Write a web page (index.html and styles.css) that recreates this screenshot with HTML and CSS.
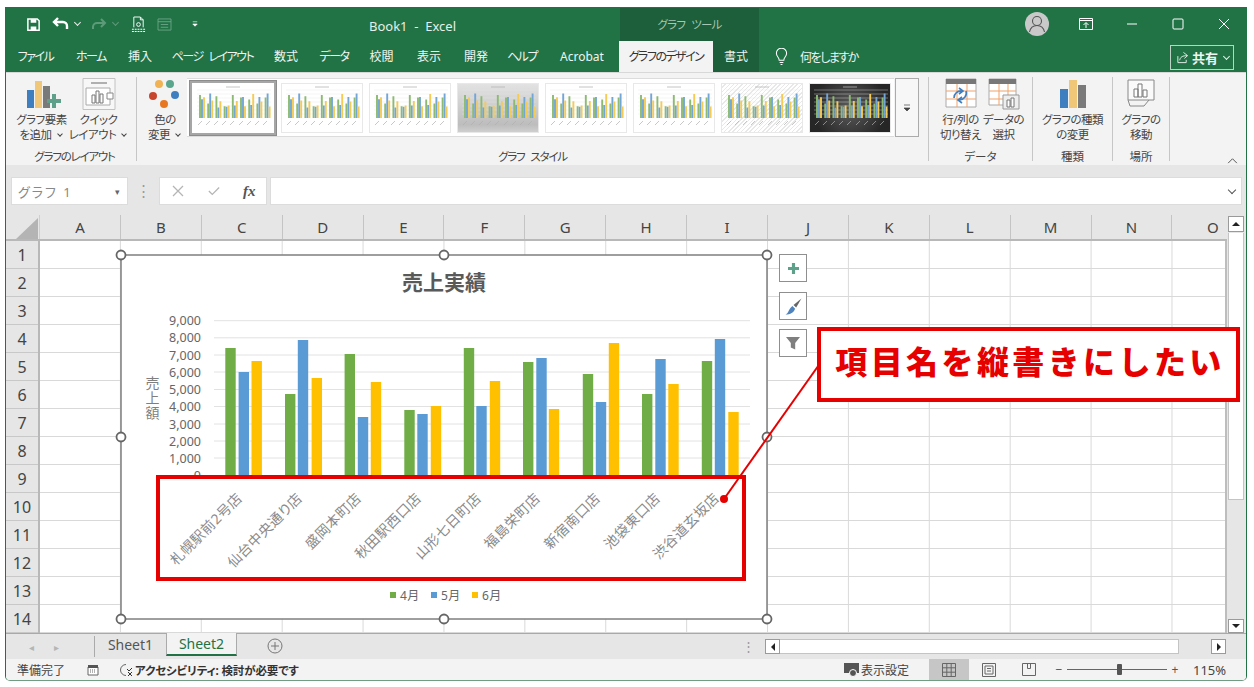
FILE: index.html
```html
<!DOCTYPE html>
<html lang="ja">
<head>
<meta charset="utf-8">
<title>Book1 - Excel</title>
<link rel="stylesheet" href="styles.css">
</head>
<body>
<svg class="defs" width="0" height="0">
  <symbol id="mini" viewBox="0 0 80 48">
    <path class="mg" d="M4 6H78M4 10H78M4 14H78M4 18H78M4 22H78M4 26H78M4 30H78"/>
    <path class="mt" d="M33 3H47"/>
    <path class="mb1" d="M7 34V11M15.2 34V19.4M23.4 34V12.2M31.6 34V22.2M39.8 34V11M48 34V13.5M56.2 34V15.6M64.4 34V19.4M72.6 34V13.5"/>
    <path class="mb2" d="M9 34V15.3M17.2 34V9.4M25.4 34V23.4M33.6 34V22.8M41.8 34V21.6M50 34V12.9M58.2 34V20.9M66.4 34V12.9M74.6 34V9.4"/>
    <path class="mb3" d="M11 34V13.2M19.2 34V16.6M27.4 34V17.2M35.6 34V21.6M43.8 34V16.9M52 34V22.2M60.2 34V10M68.4 34V17.5M76.6 34V22.5"/>
    <path class="ml" d="M5 41l4-4M13 41l4-4M21 41l4-4M29 41l4-4M37 41l4-4M46 41l4-4M54 41l4-4M62 41l4-4M70 41l4-4"/>
  </symbol>
</svg>

<div class="window">
  <header class="titlebar">
    <div class="qat">
      <svg class="q q-save" viewBox="0 0 16 16"><path d="M2 2h10l2 2v10H2z" fill="none" stroke="#fff" stroke-width="1.6"/><path d="M5 2.5h6v3.500H5zM5 10h6v4H5z" fill="#fff"/></svg>
      <svg class="q q-undo" viewBox="0 0 18 16"><path d="M6 2L2 6l4 4M2.500 6H11a4 4 0 0 1 4 4v3" fill="none" stroke="#fff" stroke-width="2.400"/></svg>
      <span class="chev c1"></span>
      <svg class="q q-redo" viewBox="0 0 18 16"><path d="M12 3l4 4-4 4M15 7H8a4 4 0 0 0-4 4v2" fill="none" stroke="#5d9a78" stroke-width="2"/></svg>
      <span class="chev dim c2"></span>
      <svg class="q q-prev" viewBox="0 0 16 18"><path d="M3 12V1h7l3 3v8M10 1v3h3" fill="none" stroke="#fff"/><path d="M1 14h14M1 16.500h14" stroke="#fff" stroke-width="1.200" stroke-dasharray="2 1"/><circle cx="8" cy="9" r="2" fill="none" stroke="#fff"/></svg>
      <svg class="q q-form" viewBox="0 0 16 14"><path d="M1 1h14v12H1zM1 4h14M4 7h8M4 10h8" fill="none" stroke="#6aa485"/></svg>
      <svg class="q q-more" viewBox="0 0 8 8"><path d="M1 1h6M1 4h6l-3 3z" fill="#fff" stroke="#fff" stroke-width=".8"/></svg>
    </div>
    <div class="doc-title">Book1&nbsp; - &nbsp;Excel</div>
    <div class="context-title">グラフ ツール</div>
    <div class="win-controls">
      <svg class="avatar" viewBox="0 0 24 24"><circle cx="12" cy="12" r="12" fill="#c9c9c9"/><circle cx="12" cy="9" r="4.500" fill="none" stroke="#555" stroke-width="1.100"/><path d="M4.500 20c1-5 4-6.500 7.500-6.500s6.500 1.500 7.500 6.500" fill="none" stroke="#555" stroke-width="1.100"/></svg>
      <svg class="ctl ctl-ribbon" viewBox="0 0 14 12"><path d="M.5 .5h13v11H.5zM.5 2.500h13" fill="none" stroke="#fff"/><path d="M7 10V5M4.500 7L7 4.500 9.500 7" fill="none" stroke="#fff"/></svg>
      <svg class="ctl ctl-min" viewBox="0 0 12 12"><path d="M1 6h10" stroke="#fff"/></svg>
      <svg class="ctl ctl-max" viewBox="0 0 12 12"><rect x="1" y="1" width="10" height="10" rx="1" fill="none" stroke="#fff"/></svg>
      <svg class="ctl ctl-close" viewBox="0 0 12 12"><path d="M1 1l10 10M11 1L1 11" stroke="#fff"/></svg>
    </div>
  </header>

  <nav class="tabbar">
    <div class="tab kana">ファイル</div>
    <div class="tab t52 kana">ホーム</div>
    <div class="tab t46">挿入</div>
    <div class="tab t99 kana">ページ レイアウト</div>
    <div class="tab t48">数式</div>
    <div class="tab t48 kana">データ</div>
    <div class="tab t47">校閲</div>
    <div class="tab t48">表示</div>
    <div class="tab t46">開発</div>
    <div class="tab t46 kana">ヘルプ</div>
    <div class="tab t74">Acrobat</div>
    <div class="tab t94 active kana">グラフのデザイン</div>
    <div class="tab t46 dark">書式</div>
    <div class="tell">
      <svg class="bulb" viewBox="0 0 14 18"><path d="M4.500 13c0-3-3-4-3-7.500a5.500 5.500 0 0 1 11 0C12.500 9 9.500 10 9.500 13zM5 15.500h4M6 17.500h2" fill="none" stroke="#fff" stroke-width="1.100"/></svg>
      <span>何をしますか</span>
    </div>
    <div class="share">
      <svg class="share-ico" viewBox="0 0 14 14"><path d="M8 1.500l4.500 3.500L9 8M12 5C7 5 4.500 6.500 4 10M2 5.500V12.500H11V9.500" fill="none" stroke="#e8f0ea"/></svg>
      <b>共有</b><span class="chev c3"></span>
    </div>
  </nav>

  <section class="ribbon">
    <div class="group g1">
      <div class="group-body">
        <div class="rbtn w57">
          <svg class="ico" viewBox="0 0 40 30"><path fill="#3f7fbf" d="M5 11h7v18H5z"/><path fill="#f0c679" d="M13 2h7v27h-7z"/><path fill="#7a7a7a" d="M21 7h7v22h-7z"/><path fill="#5fa08a" d="M25 20h5v-5h4v5h5v4h-5v5h-4v-5h-5z"/></svg>
          <span>グラフ要素<br>を追加<i></i></span>
        </div>
        <div class="rbtn w57">
          <svg class="ico" viewBox="0 0 40 32"><path d="M4 .5h32v31H4z" fill="#f7f7f7" stroke="#c2c2c2"/><path d="M12 5h16" stroke="#999" stroke-width="1.500"/><path d="M7 10h24v17H7z" fill="#fff" stroke="#aaa"/><path d="M13 25V17h3v8zM17 25V13h3v12zM21 25V16h3v9z" fill="#fff" stroke="#777"/><path d="M28 15h6v6h-6z" fill="#fff" stroke="#888"/></svg>
          <span>クイック<br>レイアウト<i></i></span>
        </div>
      </div>
      <div class="group-label">グラフのレイアウト</div>
    </div>

    <div class="group g2">
      <div class="group-body">
        <div class="rbtn w56">
          <svg class="ico" viewBox="0 0 34 32"><circle cx="11" cy="6" r="4" fill="#f0b253"/><circle cx="22" cy="6" r="4" fill="#5ba58c"/><circle cx="5" cy="18" r="4" fill="#c8452d"/><circle cx="27" cy="17" r="4" fill="#3f7fbf"/><circle cx="16" cy="26" r="4" fill="#e87722"/></svg>
          <span>色の<br>変更<i></i></span>
        </div>
        <div class="gallery">
          <div class="thumb selected"><svg viewBox="0 0 80 48"><use href="#mini"/></svg></div>
          <div class="thumb"><svg viewBox="0 0 80 48"><use href="#mini"/></svg></div>
          <div class="thumb"><svg viewBox="0 0 80 48"><use href="#mini"/></svg></div>
          <div class="thumb gray"><svg viewBox="0 0 80 48"><use href="#mini"/></svg></div>
          <div class="thumb"><svg viewBox="0 0 80 48"><use href="#mini"/></svg></div>
          <div class="thumb"><svg viewBox="0 0 80 48"><use href="#mini"/></svg></div>
          <div class="thumb hatch"><svg viewBox="0 0 80 48"><use href="#mini"/></svg></div>
          <div class="thumb black"><svg viewBox="0 0 80 48"><use href="#mini"/></svg></div>
        </div>
        <div class="gallery-more"><svg viewBox="0 0 8 8"><path d="M1 1h6M1 4h6L4 7z" fill="#444" stroke="#444" stroke-width=".7"/></svg></div>
      </div>
      <div class="group-label">グラフ スタイル</div>
    </div>

    <div class="group g3">
      <div class="group-body">
        <div class="rbtn w43">
          <svg class="ico" viewBox="0 0 32 32"><path d="M1 1h30v28H1z" fill="#fff" stroke="#aaa"/><path d="M1 1h30v5H1z" fill="#777"/><path d="M1 13h30M1 21h30M12 6v23M22 6v23" stroke="#f0a36b"/><path d="M9 20a7 7 0 0 1 8-7M14 10l4 3-4 3" fill="none" stroke="#3f7fbf" stroke-width="1.600"/><path d="M21 13a7 7 0 0 1-7 9M17 19l-4 3 4 3" fill="none" stroke="#3f7fbf" stroke-width="1.600"/></svg>
          <span>行/列の<br>切り替え</span>
        </div>
        <div class="rbtn w43">
          <svg class="ico" viewBox="0 0 32 32"><path d="M1 1h27v26H1z" fill="#fff" stroke="#aaa"/><path d="M1 1h27v5H1z" fill="#777"/><path d="M1 13h27M1 21h27M11 6v21M20 6v21" stroke="#f0a36b"/><path d="M15 17h16v14H15z" fill="#eee" stroke="#999"/><path d="M19 29v-7h3v7zM23 29V20h3v9z" fill="#fff" stroke="#777"/></svg>
          <span>データの<br>選択</span>
        </div>
      </div>
      <div class="group-label plain">データ</div>
    </div>

    <div class="group g4">
      <div class="group-body">
        <div class="rbtn grow">
          <svg class="ico" viewBox="0 0 32 32"><path fill="#3f7fbf" d="M3 11h8v19H3z"/><path fill="#f0c679" d="M12 2h8v28h-8z"/><path fill="#7a7a7a" d="M21 7h8v23h-8z"/></svg>
          <span>グラフの種類<br>の変更</span>
        </div>
      </div>
      <div class="group-label plain">種類</div>
    </div>

    <div class="group g5">
      <div class="group-body">
        <div class="rbtn grow">
          <svg class="ico" viewBox="0 0 32 32"><path d="M3 2h26v20H3z" fill="#fafafa" stroke="#888"/><path d="M9 19V11h4v8zM13 19V6h4v13zM18 19v-7h4v7z" fill="#fff" stroke="#777"/><path d="M3 22l2 6h14l5-6" fill="none" stroke="#888"/></svg>
          <span>グラフの<br>移動</span>
        </div>
      </div>
      <div class="group-label plain">場所</div>
    </div>
    <svg class="collapse" viewBox="0 0 12 8"><path d="M1 7l5-5 5 5" fill="none" stroke="#444"/></svg>
  </section>

  <section class="formula">
    <div class="namebox"><span>グラフ 1</span><em>▾</em></div>
    <div class="fdots">⋮</div>
    <div class="fxbox">
      <svg class="fxi" viewBox="0 0 12 12"><path d="M1 1l10 10M11 1L1 11" stroke="#b5b5b5" stroke-width="1.300"/></svg>
      <svg class="fxi" viewBox="0 0 14 12"><path d="M1 6l4 4 8-8" fill="none" stroke="#b5b5b5" stroke-width="1.500"/></svg>
      <span class="fx">fx</span>
    </div>
    <div class="finput"><i class="chev c4"></i></div>
  </section>

  <div class="gridarea">
    <div class="gridmain">
      <div class="colheads">
        <div class="corner"><svg viewBox="0 0 22 21"><path d="M0 21L22 0V21z" fill="#b4b4b4"/></svg></div>
        <div class="ch">A</div><div class="ch">B</div><div class="ch">C</div><div class="ch">D</div><div class="ch">E</div>
        <div class="ch">F</div><div class="ch">G</div><div class="ch">H</div><div class="ch">I</div><div class="ch">J</div>
        <div class="ch">K</div><div class="ch">L</div><div class="ch">M</div><div class="ch">N</div><div class="ch last">O</div>
      </div>
      <div class="sheetwrap">
        <div class="rowheads">
          <div>1</div><div>2</div><div>3</div><div>4</div><div>5</div><div>6</div><div>7</div>
          <div>8</div><div>9</div><div>10</div><div>11</div><div>12</div><div>13</div><div>14</div>
        </div>
        <div class="cells"></div>
      </div>
    </div>
    <div class="vscroll">
      <div class="sbtn"><svg viewBox="0 0 8 6"><path d="M0 5h8L4 1z" fill="#222"/></svg></div>
      <div class="vthumb"></div>
      <div class="sbtn end"><svg viewBox="0 0 8 6"><path d="M0 1h8L4 5z" fill="#222"/></svg></div>
    </div>
  </div>

  <div class="sheetbar">
    <div class="snav"><span>◂</span><span>▸</span></div>
    <div class="stab">Sheet1</div>
    <div class="stab on">Sheet2</div>
    <svg class="addsheet" viewBox="0 0 16 16"><circle cx="8" cy="8" r="7" fill="none" stroke="#777"/><path d="M8 4v8M4 8h8" stroke="#777"/></svg>
    <div class="hdots">⋮</div>
    <div class="hscroll">
      <div class="sbtn h"><svg viewBox="0 0 6 8"><path d="M5 0v8L1 4z" fill="#222"/></svg></div>
      <div class="hthumb"></div>
      <div class="sbtn h"><svg viewBox="0 0 6 8"><path d="M1 0v8l4-4z" fill="#222"/></svg></div>
    </div>
  </div>

  <footer class="status">
    <span class="ready">準備完了</span>
    <svg class="st-mac" viewBox="0 0 12 12"><path d="M1 3h10v8H1z" fill="#fff" stroke="#666"/><path d="M1 1h10v3H1z" fill="#555"/><path d="M3 6h6M3 8h6" stroke="#666" stroke-dasharray="1 1"/></svg>
    <svg class="st-acc" viewBox="0 0 16 14"><path d="M8 1.500a5.500 5.500 0 1 0 0 11" fill="none" stroke="#666"/><path d="M9 6l2 2 3-3M10 9l4 4M14 9l-4 4" fill="none" stroke="#333"/></svg>
    <b class="acc">アクセシビリティ: 検討が必要です</b>
    <span class="st-spacer"></span>
    <svg class="st-disp" viewBox="0 0 15 14"><path d="M0 0h15v10H0z" fill="#555"/><circle cx="9" cy="10" r="3.500" fill="#555" stroke="#fff"/></svg>
    <span class="disp">表示設定</span>
    <div class="vbtn on"><svg viewBox="0 0 14 14"><path d="M.5 .5h13v13H.5zM.5 4.800h13M.5 9.200h13M4.800 .5v13M9.200 .5v13" fill="none" stroke="#666"/></svg></div>
    <div class="vbtn"><svg viewBox="0 0 14 14"><path d="M.5 .5h13v13H.5zM3 3h8v8H3zM5 5.500h4M5 8h4" fill="none" stroke="#666"/></svg></div>
    <div class="vbtn"><svg viewBox="0 0 14 14"><path d="M.5 .5h13v12H.5zM5.500 .5v5h3v-5" fill="none" stroke="#666"/></svg></div>
    <div class="zoomer">
      <span>−</span>
      <div class="track"><i></i></div>
      <span>+</span>
    </div>
    <span class="pct">115%</span>
  </footer>
</div>

<svg class="overlay" viewBox="0 0 1254 687">
  <rect class="chart-bg" x="121" y="255" width="646" height="364"/>
  <text class="c-title" x="444" y="290" text-anchor="middle">売上実績</text>
  <path class="c-grid" d="M214 320.700H750M214 337.800H750M214 355H750M214 372H750M214 389.500H750M214 406.500H750M214 424H750M214 441H750M214 458H750"/>
  <g class="c-axis" text-anchor="end">
    <text x="201" y="325">9,000</text><text x="201" y="342">8,000</text><text x="201" y="359.500">7,000</text>
    <text x="201" y="376.500">6,000</text><text x="201" y="394">5,000</text><text x="201" y="411">4,000</text>
    <text x="201" y="428.500">3,000</text><text x="201" y="445.500">2,000</text><text x="201" y="462.500">1,000</text><text x="201" y="480">0</text>
  </g>
  <text class="c-ytitle" x="152" y="376">売上額</text>
  <path class="bar green" d="M230.500 475V348M290.200 475V394M349.800 475V354M409.500 475V410M469 475V348M528.200 475V362M588 475V374M647.200 475V394M707 475V361"/>
  <path class="bar blue" d="M243.800 475V372M303 475V340M363 475V417M422.500 475V414M481.500 475V406M541.500 475V358M601 475V402M660.500 475V359M720 475V339"/>
  <path class="bar yellow" d="M256.700 475V361M316.800 475V378M376 475V382M436 475V406M495 475V381M554 475V409M614 475V343M673.500 475V384M733.500 475V412"/>
  <rect class="red-box" x="158" y="477" width="586" height="102"/>
  <g class="c-cat" text-anchor="end">
    <text transform="rotate(-45 243 499)" x="243" y="499">札幌駅前2号店</text>
    <text transform="rotate(-45 303 499)" x="303" y="499">仙台中央通り店</text>
    <text transform="rotate(-45 362 499)" x="362" y="499">盛岡本町店</text>
    <text transform="rotate(-45 422 499)" x="422" y="499">秋田駅西口店</text>
    <text transform="rotate(-45 482 499)" x="482" y="499">山形七日町店</text>
    <text transform="rotate(-45 541 499)" x="541" y="499">福島栄町店</text>
    <text transform="rotate(-45 601 499)" x="601" y="499">新宿南口店</text>
    <text transform="rotate(-45 661 499)" x="661" y="499">池袋東口店</text>
    <text transform="rotate(-45 720 499)" x="720" y="499">渋谷道玄坂店</text>
  </g>
  <rect class="sw green-f" x="390" y="592" width="6" height="6"/><text class="c-leg" x="400" y="600">4月</text>
  <rect class="sw blue-f" x="431" y="592" width="6" height="6"/><text class="c-leg" x="441" y="600">5月</text>
  <rect class="sw yellow-f" x="472" y="592" width="6" height="6"/><text class="c-leg" x="482" y="600">6月</text>
  <rect class="frame" x="121" y="255" width="646" height="364"/>
  <g class="handle">
    <circle cx="121" cy="255" r="4.500"/><circle cx="444" cy="255" r="4.500"/><circle cx="767" cy="255" r="4.500"/>
    <circle cx="121" cy="437" r="4.500"/><circle cx="767" cy="437" r="4.500"/>
    <circle cx="121" cy="619" r="4.500"/><circle cx="444" cy="619" r="4.500"/><circle cx="767" cy="619" r="4.500"/>
  </g>
  <path class="leader" d="M821 362L724 499"/>
  <circle class="dot" cx="724" cy="499" r="4"/>
</svg>

<div class="chart-tool plus"><svg viewBox="0 0 14 14"><path d="M5 0h4v5h5v4H9v5H5V9H0V5h5z" fill="#5fa08a"/></svg></div>
<div class="chart-tool brush"><svg viewBox="0 0 16 16"><path d="M15.500 .5L8 6.500l2.500 2.500z" fill="#666"/><path d="M7 7.500l2.500 2.500c-1 3.500-4.500 5.500-9 5.500 2.500-1 2.500-3 3.500-4.500 1-2 2-2.500 3-3.500z" fill="#4f83bd"/></svg></div>
<div class="chart-tool funnel"><svg viewBox="0 0 16 16"><path d="M0 1h16l-5.500 7v7.500l-5-2.500V8z" fill="#7f7f7f"/></svg></div>

<div class="callout">項目名を縦書きにしたい</div>
</body>
</html>
```
FILE: styles.css
```css
* { box-sizing: border-box; }
html, body { margin: 0; padding: 0; background: #fff; }
body {
  width: 1254px; height: 687px; overflow: hidden; position: relative;
  font-family: "Noto Sans", "Noto Sans CJK JP", sans-serif;
  font-size: 12px; color: #444;
  font-feature-settings: "palt";
}
.defs { position: absolute; }
.window {
  margin: 7px 0 0 5px; width: 1242px; height: 674px;
  display: flex; flex-direction: column;
  border-left: 1px solid #217346; border-right: 1px solid #217346;
  border-bottom: 1px solid #6f9d84;
  border-radius: 0 0 5px 5px; overflow: hidden;
}

/* chevrons */
.chev {
  display: block; flex: none; width: 5px; height: 5px;
  border-right: 1px solid #e6efe9; border-bottom: 1px solid #e6efe9;
  transform: rotate(45deg);
}
.chev.dim { border-color: #5d9a78; }
.c1 { margin: -3px 0 0 5px; }
.c2 { margin: -3px 0 0 6px; }
.c3 { margin: -3px 0 0 6px; }
.c4 { border-color: #555; width: 6px; height: 6px; margin-top: -3px; }

/* title bar */
.titlebar {
  height: 34px; background: #217346; color: #e6efe9;
  display: flex; align-items: center; position: relative; flex: none;
}
.qat { display: flex; align-items: center; height: 100%; padding-left: 20px; }
.q { display: block; flex: none; }
.q-save { width: 15px; height: 15px; }
.q-undo { width: 18px; height: 16px; margin-left: 11px; }
.q-redo { width: 18px; height: 16px; margin-left: 9px; }
.q-prev { width: 15px; height: 17px; margin-left: 13px; }
.q-form { width: 15px; height: 13px; margin-left: 11px; }
.q-more { width: 6px; height: 6px; margin-left: 20px; }
.doc-title { position: absolute; left: 363px; top: 10px; font-size: 13px; line-height: 18px; }
.context-title {
  position: absolute; left: 614px; top: 1px; width: 139px; height: 33px;
  background: #1c5f3a; color: #a6c5b3; text-align: center;
  font-size: 11.5px; line-height: 34px; letter-spacing: -.8px; word-spacing: 4px;
}
.win-controls { margin-left: auto; display: flex; align-items: center; padding-right: 16px; }
.avatar { width: 24px; height: 24px; margin-right: 30px; }
.ctl { display: block; }
.ctl-ribbon { width: 14px; height: 12px; margin-right: 33px; }
.ctl-min { width: 12px; height: 12px; margin-right: 34px; }
.ctl-max { width: 12px; height: 12px; margin-right: 34px; }
.ctl-close { width: 12px; height: 12px; }

/* tabs */
.tabbar {
  height: 32px; background: #217346; color: #f0f5f2; flex: none;
  display: flex; border-bottom: 1px solid #d8d8d8; position: relative;
}
.tab { width: 59px; text-align: center; font-size: 12px; line-height: 31px; flex: none; }
.kana { letter-spacing: -1.5px; word-spacing: 4px; }
.t46 { width: 46px; } .t47 { width: 47px; } .t48 { width: 48px; }
.t52 { width: 52px; } .t74 { width: 74px; } .t94 { width: 94px; } .t99 { width: 99px; }
.tab.active { background: #f3f3f3; color: #333; }
.tab.dark { background: #1c5f3a; }
.tell { display: flex; align-items: center; margin-left: 16px; gap: 12px; letter-spacing: -1.5px; }
.bulb { width: 13px; height: 17px; }
.share {
  position: absolute; left: 1164px; top: 4px; width: 64px; height: 25px;
  border: 1px solid #bcd2c5; display: flex; align-items: center; padding-left: 5px;
}
.share-ico { width: 13px; height: 13px; margin-right: 3px; }
.share b { font-size: 13px; }

/* ribbon */
.ribbon { height: 92px; background: #f3f3f3; display: flex; flex: none; position: relative; padding-top: 4px; }
.group {
  height: 84px; display: flex; flex-direction: column; flex: none;
  border-right: 1px solid #c6c6c6;
}
.g1 { width: 131px; padding-left: 7px; }
.g2 { width: 792px; }
.g3 { width: 104px; }
.g4 { width: 80px; }
.g5 { width: 57px; }
.group-body { flex: 1; display: flex; min-height: 0; }
.group-label { height: 14px; flex: none; text-align: center; font-size: 11.5px; line-height: 20px; color: #444; letter-spacing: -1.2px; word-spacing: 4px; }
.group-label.plain { letter-spacing: 0; }
.rbtn { display: flex; flex-direction: column; align-items: center; flex: none; text-align: center; font-size: 11.5px; line-height: 15px; color: #444; letter-spacing: -.5px; }
.rbtn i {
  display: inline-block; width: 4px; height: 4px; margin: 0 2px 3px 6px;
  border-right: 1px solid #444; border-bottom: 1px solid #444; transform: rotate(45deg);
}
.rbtn .ico { width: 40px; height: 32px; display: block; margin-bottom: 2px; margin-top: 1px; flex: none; }
.rbtn span { white-space: nowrap; }
.w57 { width: 57px; } .w56 { width: 56px; margin-right: -6px; } .w43 { width: 43px; }
.g3 .group-body { padding-left: 10px; }
.grow { flex: 1; }
.gallery {
  width: 707px; height: 59px; margin-top: 1px; background: #fff;
  display: flex; align-items: center; flex: none;
  border-top: 1px solid #dcdcdc; border-bottom: 1px solid #dcdcdc;
  padding-left: 2px; gap: 8px;
}
.thumb { width: 80px; height: 48px; flex: none; background: #fff; box-shadow: 0 0 0 1px #e8e8e8; }
.thumb svg { display: block; width: 100%; height: 100%; }
.thumb.selected { width: 88px; height: 56px; background: #fff; border: 3px solid #a6a6a6; margin-right: -3px; outline: 1px solid #8c8c8c; outline-offset: -1px; padding: 1px; box-shadow: none; }
.thumb.gray { background: linear-gradient(180deg, #e2e2e2, #bdbdbd 85%, #cfcfcf); }
.thumb.hatch { background: repeating-linear-gradient(135deg, #fff 0 2px, #e8e8e8 2px 3px); }
.thumb.black { background: radial-gradient(circle at 50% 50%, #5c5c5c, #262626 80%); }
.mg { stroke: #e4e4e4; stroke-width: .4; fill: none; }
.mt { stroke: #b5b5b5; stroke-width: .8; }
.mb1 { stroke: #8cba72; stroke-width: 1.900; fill: none; }
.mb2 { stroke: #72a6d6; stroke-width: 1.900; fill: none; }
.mb3 { stroke: #f5cb55; stroke-width: 1.900; fill: none; }
.ml { stroke: #b0b0b0; stroke-width: .7; fill: none; }
.gallery-more {
  width: 24px; height: 59px; margin-top: 1px; margin-left: 1px; border: 1px solid #ababab; background: #f7f7f7;
  display: flex; align-items: center; justify-content: center; flex: none;
}
.gallery-more svg { width: 8px; height: 8px; }
.collapse { position: absolute; right: 8px; top: 84px; width: 11px; height: 7px; }

/* formula bar */
.formula { height: 50px; background: #e6e6e6; display: flex; align-items: flex-start; padding: 12px 4px 0 5px; flex: none; }
.namebox {
  width: 117px; height: 28px; background: #fff; border: 1px solid #dcdcdc;
  display: flex; align-items: center; justify-content: space-between;
  padding: 0 5px 0 6px; color: #888; font-size: 13px; letter-spacing: 2px;
}
.namebox em { font-style: normal; font-size: 9px; color: #666; }
.fdots { width: 31px; text-align: center; color: #999; font-size: 15px; line-height: 26px; }
.fxbox {
  width: 108px; height: 28px; background: #fff; border: 1px solid #dcdcdc;
  display: flex; align-items: center; padding-left: 12px;
}
.fxi { width: 12px; height: 12px; margin-right: 24px; }
.fx { font-family: "Liberation Serif", serif; font-style: italic; font-size: 15px; color: #555; margin-left: -1px; font-weight: 700; }
.finput {
  flex: 1; height: 28px; margin-left: 3px; background: #fff; border: 1px solid #dcdcdc;
  display: flex; align-items: center; justify-content: flex-end; padding-right: 6px;
}

/* grid */
.gridarea { height: 418px; display: flex; flex: none; }
.gridmain { width: 1221px; flex: none; overflow: hidden; display: flex; flex-direction: column; }
.colheads { height: 26px; display: flex; background: #e6e6e6; border-bottom: 2px solid #b8b8b8; flex: none; }
.corner { width: 34px; flex: none; padding: 3px 0 0 10px; border-right: 1px solid #cfcfcf; }
.corner svg { display: block; width: 22px; height: 21px; }
.ch { width: 80.9px; flex: none; text-align: center; font-size: 15px; line-height: 24px; color: #444; border-right: 1px solid #c4c4c4; }
.ch.last { border-right: 0; }
.sheetwrap { height: 392px; display: flex; flex: none; }
.rowheads { width: 34px; flex: none; background: #e6e6e6; border-right: 2px solid #b8b8b8; }
.rowheads div { height: 28px; text-align: center; font-size: 16px; line-height: 28px; color: #444; border-bottom: 1px solid #c8c8c8; }
.cells {
  flex: 1; background-color: #fff;
  background-image:
    linear-gradient(to left, #d9d9d9 1px, transparent 1px),
    linear-gradient(to top, #d9d9d9 1px, transparent 1px);
  background-size: 80.9px 100%, 100% 28px;
  border-right: 2px solid #bdbdbd;
}
.vscroll { flex: 1; background: #e6e6e6; display: flex; flex-direction: column; padding: 1px 2px 0 1px; }
.sbtn { background: #fff; border: 1px solid #9a9a9a; display: flex; align-items: center; justify-content: center; flex: none; height: 16px; }
.sbtn svg { width: 8px; height: 6px; }
.vthumb { height: 267px; background: #fff; border: 1px solid #c4c4c4; border-top: 0; flex: none; margin-top: 1px; }
.sbtn.end { margin-top: auto; height: 14px; }

/* sheet tabs */
.sheetbar { height: 26px; background: #e6e6e6; display: flex; align-items: flex-start; border-top: 1px solid #a9a9a9; flex: none; position: relative; }
.snav { width: 89px; height: 21px; display: flex; gap: 20px; justify-content: center; padding: 2px 12px 0 0; margin-top: 2px; color: #b5b5b5; font-size: 10px; line-height: 18px; border-right: 1px solid #aaa; flex: none; }
.stab { width: 71px; height: 22px; text-align: center; font-size: 14px; line-height: 22px; color: #555; flex: none; }
.stab.on { background: #f3f3f3; color: #217346; border-left: 1px solid #aaa; border-right: 1px solid #aaa; border-bottom: 2px solid #217346; margin-top: -1px; height: 23px; }
.addsheet { width: 16px; height: 16px; margin: 4px 0 0 30px; flex: none; }
.hdots { margin-left: auto; width: 12px; text-align: center; color: #999; font-size: 13px; line-height: 24px; }
.hscroll { width: 461px; margin: 5px 20px 0 11px; height: 15px; display: flex; flex: none; }
.sbtn.h { width: 15px; height: 15px; }
.sbtn.h svg { width: 6px; height: 8px; }
.hthumb { width: 399px; background: #fff; border: 1px solid #c4c4c4; border-left: 0; flex: none; margin-right: auto; }

/* status */
.status { flex: 1; min-height: 0; background: #f3f3f3; display: flex; align-items: center; padding: 0 20px 0 11px; font-size: 12px; color: #444; }
.ready { width: 70px; flex: none; }
.st-mac { width: 12px; height: 12px; flex: none; margin-right: 19px; }
.st-acc { width: 16px; height: 14px; flex: none; margin-right: 1px; }
.acc { font-weight: 700; font-size: 11.5px; color: #333; letter-spacing: -.15px; }
.st-spacer { flex: 1; }
.st-disp { width: 15px; height: 14px; flex: none; margin-right: 2px; }
.disp { width: 68px; flex: none; }
.vbtn { width: 40px; height: 100%; display: flex; align-items: center; justify-content: center; flex: none; }
.vbtn.on { background: #c6c6c6; }
.vbtn svg { width: 14px; height: 14px; }
.zoomer { display: flex; align-items: center; margin-left: 5px; gap: 3px; color: #555; flex: none; }
.zoomer span { width: 10px; text-align: center; flex: none; }
.track { width: 100px; height: 1px; background: #666; position: relative; flex: none; }
.track i { position: absolute; left: 50px; top: -5px; width: 5px; height: 11px; background: #555; border-radius: 1px; }
.pct { width: 33px; margin-left: 13px; flex: none; font-size: 13px; white-space: nowrap; }

/* overlay: chart on the sheet */
.overlay { position: absolute; left: 0; top: 0; width: 1254px; height: 687px; }
.chart-bg { fill: #fff; }
.frame { fill: none; stroke: #7f7f7f; stroke-width: 1.500; }
.handle circle { fill: #fff; stroke: #666; stroke-width: 1.800; }
.c-title { font-size: 21px; font-weight: 700; fill: #595959; }
.c-grid { stroke: #e2e2e2; stroke-width: 1; fill: none; }
.c-axis text { font-size: 12.5px; fill: #666; }
.c-ytitle { font-size: 14px; fill: #7f7f7f; writing-mode: vertical-rl; letter-spacing: 1px; font-feature-settings: normal; }
.bar { stroke-width: 10.400; fill: none; }
.green { stroke: #70ad47; } .blue { stroke: #5b9bd5; } .yellow { stroke: #ffc000; }
.green-f { fill: #70ad47; } .blue-f { fill: #5b9bd5; } .yellow-f { fill: #ffc000; }
.red-box { fill: #fff; stroke: #e60000; stroke-width: 4; }
.c-cat text { font-size: 14px; fill: #8a8a8a; letter-spacing: .4px; }
.c-leg { font-size: 12px; fill: #666; letter-spacing: .4px; }
.leader { stroke: #e60000; stroke-width: 2; fill: none; }
.dot { fill: #e60000; }

.chart-tool {
  position: absolute; left: 779px; width: 28px; height: 28px;
  background: #fff; border: 1px solid #8f8f8f;
  display: flex; align-items: center; justify-content: center;
}
.chart-tool svg { width: 14px; height: 14px; }
.chart-tool.plus svg { width: 11px; height: 11px; }
.chart-tool.brush svg { width: 17px; height: 17px; }
.plus { top: 254px; } .brush { top: 292px; } .funnel { top: 329px; }

.callout {
  position: absolute; left: 817px; top: 327px; width: 423px; height: 75px;
  background: #fff; border: 4px solid #e60000; color: #e60000;
  font-size: 32px; font-weight: 900; letter-spacing: 3.4px; padding: 0 0 9px 3px;
  display: flex; align-items: center; justify-content: center; white-space: nowrap;
  font-family: "Noto Sans CJK JP", sans-serif; font-feature-settings: normal;
}
```
